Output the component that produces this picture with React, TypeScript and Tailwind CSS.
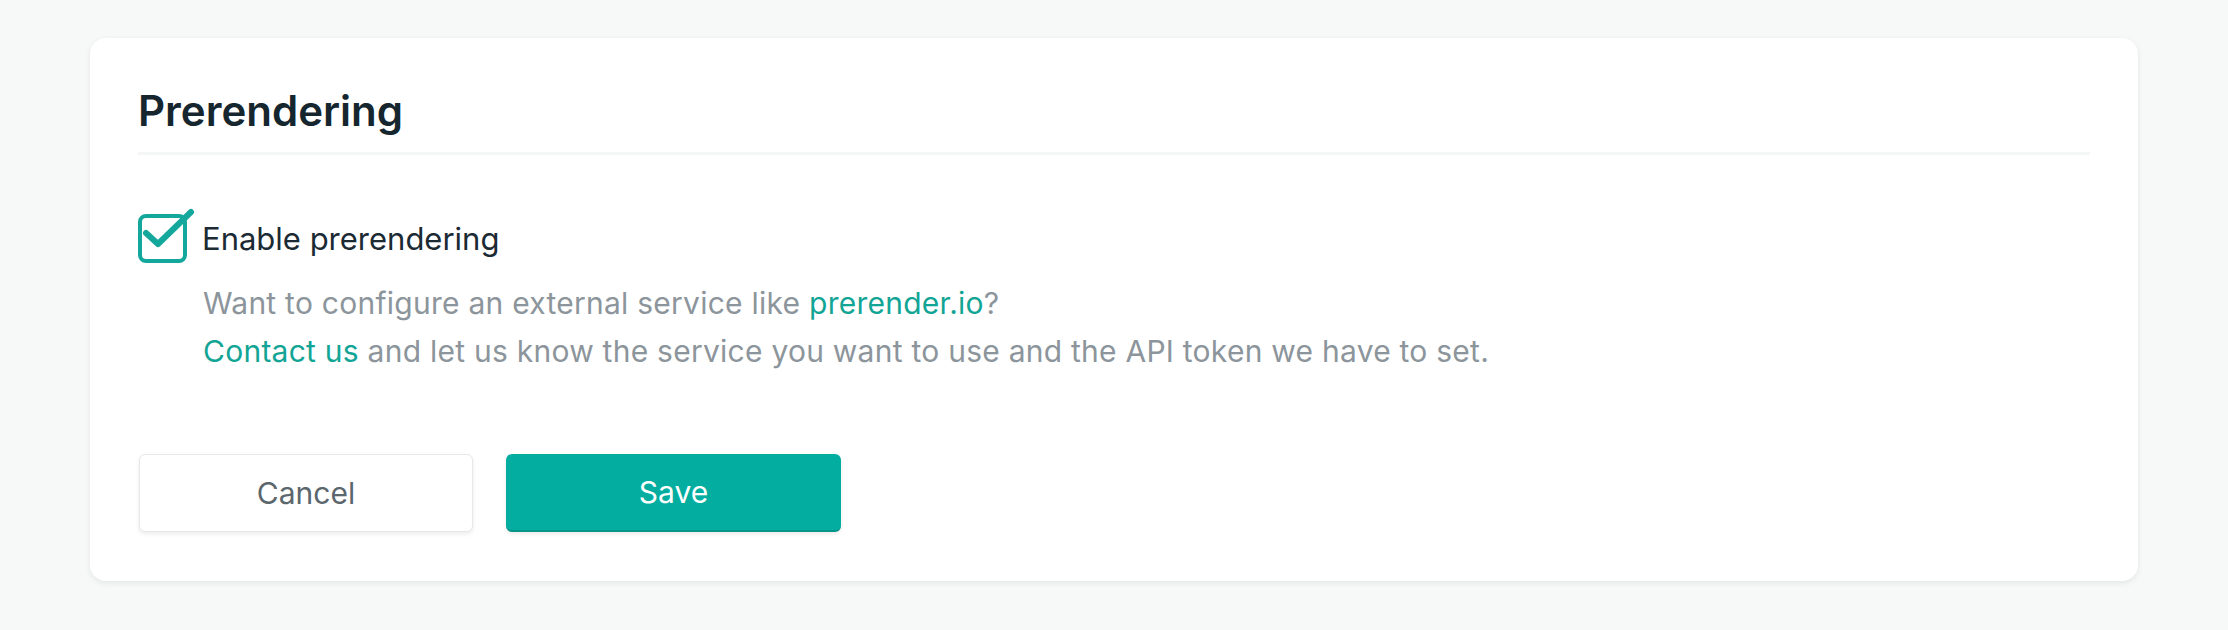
function CheckIcon() {
  return (
    <svg width="66" height="60" viewBox="0 0 66 60" fill="none" className="shrink-0">
      <rect x="4" y="10" width="45" height="45" rx="6" stroke="#13a89b" strokeWidth="4" />
      <path d="M10 27 L22 38 L55 6" stroke="#13a89b" strokeWidth="6" strokeLinecap="round" strokeLinejoin="round" />
    </svg>
  )
}

export default function App() {
  return (
    <div className="min-h-[630px] bg-[#f7f9f9] pt-[38px] px-[90px] font-['Inter',sans-serif]">
      <div className="bg-white rounded-2xl shadow-[0_2px_6px_rgba(0,0,0,0.08)] px-12 pt-[46px] pb-[49px]">
        <h1 className="text-[42px] leading-[53px] font-semibold text-[#15262f]">Prerendering</h1>
        <div className="mt-[15px] h-[3px] bg-[#f5f7f7]" />

        <div className="flex items-start mt-[51px] -ml-[2px]">
          <CheckIcon />
          <span className="mt-[14px] text-[31px] leading-[38px] text-[#1b2a33]">Enable prerendering</span>
        </div>

        <div className="ml-[65px] mt-[13px] text-[30px] leading-[48px] tracking-[0.25px] text-[#8c959b]">
          <p>
            Want to configure an external service like <a className="text-[#12a595]">prerender.io</a>?
          </p>
          <p>
            <a className="text-[#12a595]">Contact us</a> and let us know the service you want to use and the API token we have to set.
          </p>
        </div>

        <div className="flex gap-[33px] mt-[79px] ml-[1px]">
          <button className="w-[334px] h-[78px] rounded-md border border-[#e6e8e9] bg-white shadow-[0_2px_4px_rgba(0,0,0,0.08)] text-[30px] text-[#5b666d]">
            Cancel
          </button>
          <button className="w-[335px] h-[78px] rounded-md bg-[#03ad9f] border-b-2 border-[#07958a] shadow-[0_2px_4px_rgba(0,0,0,0.08)] text-[30px] text-white">
            Save
          </button>
        </div>
      </div>
    </div>
  )
}
